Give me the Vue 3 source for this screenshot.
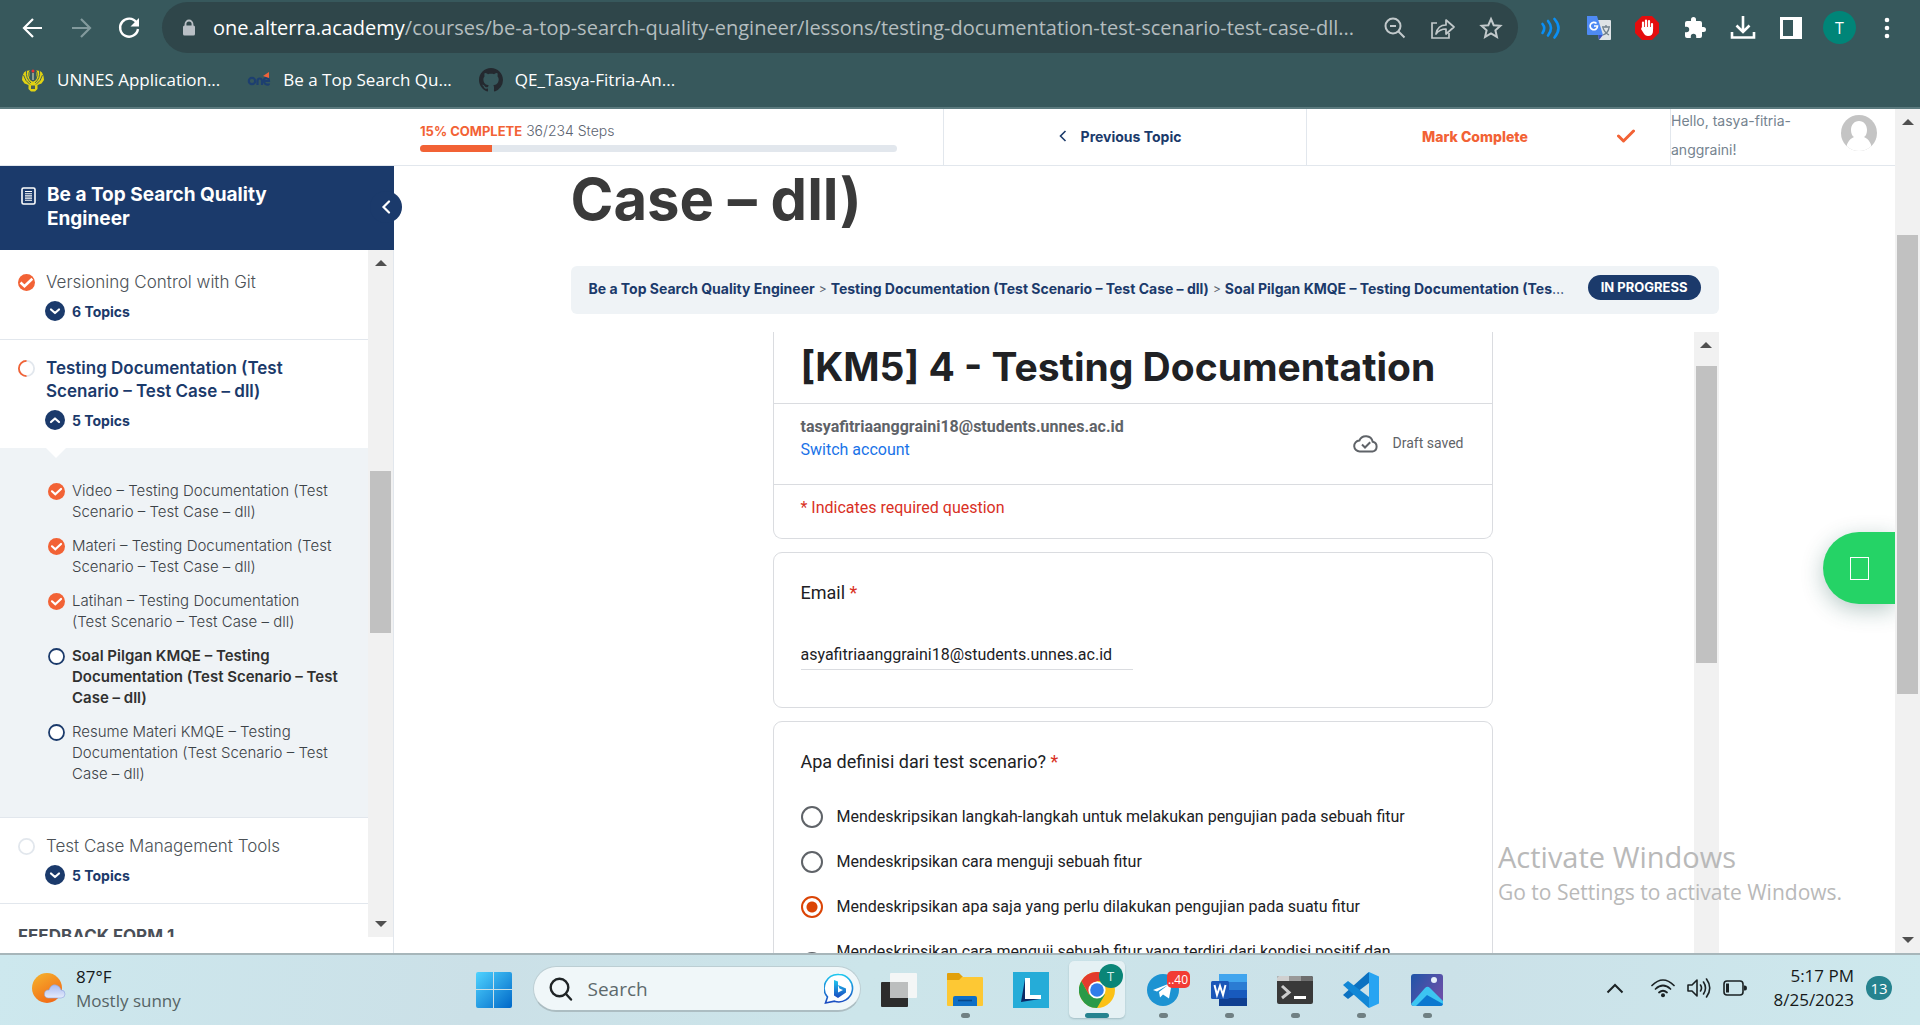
<script setup>
import { ref } from 'vue'

const lessons = [
  { title: 'Versioning Control with Git', count: '6 Topics', state: 'done', first: true },
  {
    title: 'Testing Documentation (Test\nScenario – Test Case – dll)',
    count: '5 Topics',
    state: 'partial',
    open: true,
    topics: [
      { text: 'Video – Testing Documentation (Test\nScenario – Test Case – dll)', done: true },
      { text: 'Materi – Testing Documentation (Test\nScenario – Test Case – dll)', done: true },
      { text: 'Latihan – Testing Documentation\n(Test Scenario – Test Case – dll)', done: true },
      { text: 'Soal Pilgan KMQE – Testing\nDocumentation (Test Scenario – Test\nCase – dll)', current: true },
      { text: 'Resume Materi KMQE – Testing\nDocumentation (Test Scenario – Test\nCase – dll)' }
    ]
  },
  { title: 'Test Case Management Tools', count: '5 Topics', state: 'empty' }
]

const options = [
  'Mendeskripsikan langkah-langkah untuk melakukan pengujian pada sebuah fitur',
  'Mendeskripsikan cara menguji sebuah fitur',
  'Mendeskripsikan apa saja yang perlu dilakukan pengujian pada suatu fitur',
  'Mendeskripsikan cara menguji sebuah fitur yang terdiri dari kondisi positif dan\nnegatif'
]
const answer = ref(options[2])
const email = ref('asyafitriaanggraini18@students.unnes.ac.id')
const progress = 15
</script>

<template>
  <div class="desktop">
    <header class="browser">
      <div class="toolbar">
        <nav class="nav-buttons">
          <button class="icon-btn" aria-label="Back">
            <svg width="24" height="24" viewBox="0 0 24 24"><path d="M21 12H3M12 3l-9 9 9 9" fill="none" stroke="#fff" stroke-width="2.2" /></svg>
          </button>
          <button class="icon-btn" aria-label="Forward">
            <svg width="24" height="24" viewBox="0 0 24 24"><path d="M3 12h18M12 3l9 9-9 9" fill="none" stroke="#829a9d" stroke-width="2.2" /></svg>
          </button>
          <button class="icon-btn" aria-label="Reload">
            <svg width="24" height="24" viewBox="0 0 24 24"><path d="M19.5 6.5A9 9 0 1 0 21 13" fill="none" stroke="#fff" stroke-width="2.4" /><path d="M22 2v8.500h-8.500z" fill="#fff" /></svg>
          </button>
        </nav>
        <div class="omnibox">
          <svg class="lock" width="14" height="18" viewBox="0 0 14 18"><path d="M3.500 8V5a3.500 3.500 0 0 1 7 0v3" fill="none" stroke="#b9bfc5" stroke-width="1.800" /><rect x="1" y="6.500" width="12" height="10" rx="1.500" fill="#b9bfc5" /></svg>
          <span class="url"><b>one.alterra.academy</b>/courses/be-a-top-search-quality-engineer/lessons/testing-documentation-test-scenario-test-case-dll...</span>
          <button class="icon-btn" aria-label="Zoom out">
            <svg width="24" height="24" viewBox="0 0 24 24"><g fill="none" stroke="#c2c9cb" stroke-width="2"><circle cx="10" cy="10" r="7.500" /><path d="M15.500 15.500l6 6M7 10h6" /></g></svg>
          </button>
          <button class="icon-btn" aria-label="Share">
            <svg width="26" height="24" viewBox="0 0 26 24"><g fill="none" stroke="#c2c9cb" stroke-width="1.700"><path d="M7 7H2v15h17v-5" /><path d="M6 18c1-6 4-9 10-9V4l8 7-8 7v-5c-4 0-7 1-10 5z" stroke-linejoin="round" /></g></svg>
          </button>
          <button class="icon-btn" aria-label="Bookmark">
            <svg width="24" height="24" viewBox="0 0 24 24"><path d="M12 3l2.700 6.200 6.700.6-5 4.500 1.500 6.600L12 17.400 6.100 20.900l1.500-6.600-5-4.500 6.700-.6z" fill="none" stroke="#c2c9cb" stroke-width="2" /></svg>
          </button>
        </div>
        <div class="extensions">
          <svg width="24" height="24" viewBox="0 0 24 24"><g fill="none" stroke="#0a8ff5" stroke-width="2.600" stroke-linecap="round"><path d="M3.500 8q3.500 4 0 9" /><path d="M9 5q6 7 0 14.500" /><path d="M15.500 3q8 9 0 18.500" /></g></svg>
          <svg width="26" height="26" viewBox="0 0 26 26"><path d="M10 5h14a1 1 0 0 1 1 1v18a1 1 0 0 1-1 1H13z" fill="#dfe3e6" /><path d="M12 20h5l-4 5z" fill="#3a53c4" /><path d="M1 1h10l6 19H2a1 1 0 0 1-1-1z" fill="#4e8af4" /><path d="M10.500 8.500A3.700 3.700 0 1 0 11.500 11H8" fill="none" stroke="#fff" stroke-width="1.700" /><path d="M16 12h8M20 10v2M17 13q2 5 6 7M23 13q-1 5-6 7" fill="none" stroke="#70808c" stroke-width="1.300" /></svg>
          <svg width="24" height="24" viewBox="0 0 24 24"><path d="M7 0h10l7 7v10l-7 7H7l-7-7V7z" fill="#e40d0d" /><path d="M8 13V6.500M11 12V4.500M14 12V5M17 13V8" stroke="#fff" stroke-width="2.200" stroke-linecap="round" /><path d="M7 11h11v4q0 5-5 5-3 0-4.500-3L6 13z" fill="#fff" /></svg>
          <svg width="24" height="24" viewBox="0 0 24 24"><path d="M20.500 11H19V7a2 2 0 0 0-2-2h-4V3.500a2.500 2.500 0 0 0-5 0V5H4a2 2 0 0 0-2 2v3.800h1.500a2.700 2.700 0 0 1 0 5.400H2V20a2 2 0 0 0 2 2h3.800v-1.500a2.700 2.700 0 0 1 5.400 0V22H17a2 2 0 0 0 2-2v-4h1.500a2.500 2.500 0 0 0 0-5z" fill="#fff" /></svg>
          <svg width="26" height="26" viewBox="0 0 26 26"><path d="M13 1v15M6.500 10.500L13 17l6.500-6.500M2 17v5.500h22V17" fill="none" stroke="#fff" stroke-width="2.600" /></svg>
          <svg width="24" height="24" viewBox="0 0 24 24"><path d="M1 1h22v22H1zM4 4v16h10V4z" fill="#fff" fill-rule="evenodd" /></svg>
          <span class="profile">T</span>
          <svg width="24" height="24" viewBox="0 0 24 24"><g fill="#fff"><circle cx="12" cy="4" r="2.300" /><circle cx="12" cy="12" r="2.300" /><circle cx="12" cy="20" r="2.300" /></g></svg>
        </div>
      </div>
      <nav class="bookmarks">
        <a href="#">
          <svg width="24" height="24" viewBox="0 0 24 24"><path d="M11.500 13.500L8.500 11 9 2.500Q5 2 3 4.500L1.500 8 1 12l2.500 3.500 4 1.500V21l2.500 2.500h4l2.500-2.500v-4l4-1.500L23 12l-.5-4L21 4.500Q19 2 15 2.500l.5 8.500-3 2.500z" fill="#e2d312" /><path d="M9 2.500Q6 7 10.500 13M5.500 3Q4.500 10 10 15M2.500 7Q4 13 9 16.500M15 2.500q3 4.500-1.500 10.500M18.500 3q1 7-4.500 12M21.500 7q-1.500 6-6.500 9.500" fill="none" stroke="#37585c" stroke-width=".9" /><path d="M10 17.500h4v3.500h-4z" fill="#4a6054" /><circle cx="12" cy="3" r="1.500" fill="#e33" /><path d="M12 5v7" stroke="#e9e2c0" /></svg>
          <span>UNNES Application...</span>
        </a>
        <a href="#">
          <svg width="24" height="24" viewBox="0 0 24 24"><g fill="none" stroke="#1d3f70" stroke-width="2.200"><circle cx="5" cy="13" r="3.200" /><path d="M10.500 17v-4q0-2.500 2.200-2.500T15 13v4M17 13h5q0-3-2.600-3T17 13t2.600 3.500T22 15.500" /></g><path d="M16 8l6-4v6z" fill="#f0633a" /></svg>
          <span>Be a Top Search Qu...</span>
        </a>
        <a href="#">
          <svg width="24" height="24" viewBox="0 0 16 16"><path fill="#24292f" d="M8 0C3.580 0 0 3.580 0 8c0 3.540 2.290 6.530 5.470 7.590.4.070.55-.17.55-.38 0-.19-.01-.82-.01-1.490-2.010.37-2.530-.49-2.690-.94-.09-.23-.48-.94-.82-1.130-.28-.15-.68-.52-.01-.53.63-.01 1.080.58 1.230.82.72 1.210 1.870.87 2.330.66.07-.52.28-.87.51-1.070-1.780-.2-3.640-.89-3.640-3.950 0-.87.31-1.590.82-2.150-.08-.2-.36-1.020.08-2.120 0 0 .67-.21 2.200.82.64-.18 1.320-.27 2-.27s1.360.09 2 .27c1.530-1.040 2.200-.82 2.200-.82.44 1.100.16 1.920.08 2.120.51.56.82 1.270.82 2.150 0 3.070-1.870 3.750-3.650 3.950.29.25.54.73.54 1.480 0 1.070-.01 1.930-.01 2.200 0 .21.15.46.55.38A8.010 8.010 0 0 0 16 8c0-4.420-3.580-8-8-8z" /></svg>
          <span>QE_Tasya-Fitria-An...</span>
        </a>
      </nav>
    </header>

    <div class="viewport">
      <div class="site">
        <header class="course-bar">
          <div class="brand"></div>
          <div class="progress">
            <p><strong>15% COMPLETE</strong> <span>36/234 Steps</span></p>
            <div class="track" role="progressbar" :aria-valuenow="progress"><div class="fill" :style="{ width: progress + '%' }"></div></div>
          </div>
          <a class="prev" href="#">
            <svg width="8" height="12" viewBox="0 0 8 12"><path d="M6.500 1L1.500 6l5 5" fill="none" stroke="#1b3a6b" stroke-width="1.600" /></svg>
            Previous Topic
          </a>
          <button class="mark">
            <span>Mark Complete</span>
            <svg width="18" height="14" viewBox="0 0 18 14"><path d="M1.500 7l5 5L16.500 2" fill="none" stroke="#f26235" stroke-width="3" stroke-linecap="round" stroke-linejoin="round" /></svg>
          </button>
          <div class="user">
            <p>Hello, tasya-fitria-anggraini!</p>
            <svg width="36" height="36" viewBox="0 0 36 36"><clipPath id="avatar-round"><circle cx="18" cy="18" r="18" /></clipPath><g clip-path="url(#avatar-round)"><rect width="36" height="36" fill="#c4c4c4" /><path d="M18 6c5 0 8 4 8 9 0 3-1 6-3 7 5 2 8 7 8 14H5c0-7 3-12 8-14-2-1-3-4-3-7 0-5 3-9 8-9z" fill="#fff" /></g></svg>
          </div>
        </header>

        <div class="columns">
          <aside class="sidebar">
            <div class="course-title">
              <svg width="15" height="18" viewBox="0 0 15 18"><rect x="1" y="1" width="13" height="16" rx="1.500" fill="none" stroke="#fff" stroke-width="1.600" /><path d="M4 4.500h7M4 6.700h7M4 8.900h7M4 11.100h7M4 13.300h7" stroke="#fff" stroke-width="1.100" /></svg>
              <h2>Be a Top Search Quality<br />Engineer</h2>
              <button class="collapse" aria-label="Collapse sidebar">
                <svg width="10" height="14" viewBox="0 0 10 14"><path d="M8 1.500L2.500 7 8 12.500" fill="none" stroke="#fff" stroke-width="2.200" stroke-linecap="round" /></svg>
              </button>
            </div>
            <div class="lesson-scroll">
              <div class="lesson-list">
                <section v-for="lesson in lessons" :key="lesson.title" class="lesson-block">
                  <div class="lesson" :class="{ first: lesson.first, open: lesson.open }">
                    <svg class="status" width="17" height="17" viewBox="0 0 17 17">
                      <template v-if="lesson.state === 'done'"><circle cx="8.500" cy="8.500" r="8.500" fill="#f26235" /><path d="M2.500 8.500l4 3.800 7.800-7.500" fill="none" stroke="#fff" stroke-width="2.600" /></template>
                      <template v-else><circle cx="8.500" cy="8.500" r="7.600" fill="#fff" stroke="#e2e7ed" stroke-width="1.800" /><path v-if="lesson.state === 'partial'" d="M8.500 .9a7.600 7.600 0 0 0 0 15.200" fill="none" stroke="#f26235" stroke-width="1.800" /></template>
                    </svg>
                    <div>
                      <a class="lesson-title" :class="{ active: lesson.open }" href="#">{{ lesson.title }}</a>
                      <button class="topic-toggle">
                        <svg width="20" height="20" viewBox="0 0 20 20"><circle cx="10" cy="10" r="10" fill="#1b3a6b" /><path :d="lesson.open ? 'M6 12l4-3.500 4 3.500' : 'M6 8.500l4 3.500 4-3.500'" fill="none" stroke="#fff" stroke-width="2.200" stroke-linecap="round" stroke-linejoin="round" /></svg>
                        {{ lesson.count }}
                      </button>
                    </div>
                  </div>
                  <ul v-if="lesson.open" class="topics">
                    <li v-for="topic in lesson.topics" :key="topic.text" :class="{ current: topic.current }">
                      <svg width="17" height="17" viewBox="0 0 17 17">
                        <template v-if="topic.done"><circle cx="8.500" cy="8.500" r="8.500" fill="#f26235" /><path d="M4 8.300l3.300 3 5.700-5.300" fill="none" stroke="#fff" stroke-width="2.200" stroke-linecap="round" /></template>
                        <circle v-else cx="8.500" cy="8.500" r="7.500" fill="#fff" stroke="#1b3a6b" stroke-width="1.800" />
                      </svg>
                      <a href="#">{{ topic.text }}</a>
                    </li>
                  </ul>
                </section>
                <h3 class="section-heading">FEEDBACK FORM 1</h3>
              </div>
              <div class="scrollbar">
                <i class="arrow up"></i>
                <div class="rail"><div class="thumb side-thumb"></div></div>
                <i class="arrow down"></i>
              </div>
            </div>
          </aside>

          <main class="content">
            <h1>Case – dll)</h1>
            <div class="crumbs">
              <nav><a href="#">Be a Top Search Quality Engineer</a><i>&gt;</i><a href="#">Testing Documentation (Test Scenario – Test Case – dll)</a><i>&gt;</i><a href="#">Soal Pilgan KMQE – Testing Documentation (Tes</a><span>…</span></nav>
              <strong class="badge">IN PROGRESS</strong>
            </div>
            <div class="frame">
              <form class="form" @submit.prevent>
                <section class="card top-card">
                  <h2>[KM5] 4 - Testing Documentation</h2>
                  <div class="account">
                    <div>
                      <b>tasyafitriaanggraini18@students.unnes.ac.id</b>
                      <a href="#">Switch account</a>
                    </div>
                    <span class="draft">
                      <svg width="26" height="20" viewBox="0 0 26 20"><path d="M7 18.500a5.500 5.500 0 0 1-.6-11A7 7 0 0 1 19.700 8.700a5 5 0 0 1-.2 9.800z" fill="none" stroke="#5f6368" stroke-width="2" /><path d="M9 11.500l3 3 5.200-5.200" fill="none" stroke="#5f6368" stroke-width="2" /></svg>
                      Draft saved
                    </span>
                  </div>
                  <p class="required-note">* Indicates required question</p>
                </section>
                <section class="card email-card">
                  <label class="question" for="email">Email <em>*</em></label>
                  <input id="email" v-model="email" class="email-input" type="text" />
                </section>
                <fieldset class="card choice-card">
                  <legend class="question">Apa definisi dari test scenario? <em>*</em></legend>
                  <label v-for="o in options" :key="o" class="option">
                    <input v-model="answer" type="radio" name="definition" :value="o" />
                    <span>{{ o }}</span>
                  </label>
                </fieldset>
              </form>
              <div class="scrollbar">
                <i class="arrow up"></i>
                <div class="rail"><div class="thumb frame-thumb"></div></div>
              </div>
            </div>
          </main>
        </div>
        <button class="whatsapp" aria-label="Chat"><i></i></button>
      </div>
      <div class="scrollbar page-scroll">
        <i class="arrow up"></i>
        <div class="rail"><div class="thumb page-thumb"></div></div>
        <i class="arrow down"></i>
      </div>
      <div class="watermark">
        <p class="big">Activate Windows</p>
        <p>Go to Settings to activate Windows.</p>
      </div>
    </div>

    <footer class="taskbar">
      <div class="weather">
        <svg width="34" height="32" viewBox="0 0 34 32"><defs><linearGradient id="sun" x1="0" y1="0" x2=".6" y2="1"><stop offset="0" stop-color="#f5b52e" /><stop offset="1" stop-color="#f26b16" /></linearGradient><linearGradient id="cloud" x1="0" y1="0" x2="0" y2="1"><stop offset="0" stop-color="#a9bbf0" /><stop offset="1" stop-color="#e4ebfb" /></linearGradient></defs><circle cx="15" cy="15" r="15" fill="url(#sun)" /><path d="M16 25a4 4 0 0 1 1-8q2-6 7-5 4 1 5 5a4 4 0 0 1 0 8z" fill="url(#cloud)" stroke="#8ea4de" stroke-width=".6" /></svg>
        <div><p>87°F</p><p class="muted">Mostly sunny</p></div>
      </div>
      <div class="dock">
        <button class="slot" aria-label="Start">
          <svg width="36" height="36" viewBox="0 0 36 36"><defs><linearGradient id="win" x1="0" y1="0" x2="1" y2="1"><stop offset="0" stop-color="#4fd3ff" /><stop offset="1" stop-color="#0068c8" /></linearGradient></defs><path d="M2 0h15v17H0V2a2 2 0 0 1 2-2zM18 0h16a2 2 0 0 1 2 2v15H18zM0 18h17v18H2a2 2 0 0 1-2-2zM18 18h18v16a2 2 0 0 1-2 2H18z" fill="url(#win)" /></svg>
        </button>
        <label class="search">
          <svg width="24" height="24" viewBox="0 0 24 24"><g fill="none" stroke="#1f2426" stroke-width="2.400" stroke-linecap="round"><circle cx="10.500" cy="10.500" r="8.800" /><path d="M17 17l5 5.500" /></g></svg>
          <input type="text" placeholder="Search" aria-label="Search" />
          <svg width="30" height="32" viewBox="0 0 30 32"><defs><linearGradient id="bing" x1="0" y1="0" x2="0" y2="1"><stop offset="0" stop-color="#20c8ef" /><stop offset="1" stop-color="#1a49c0" /></linearGradient></defs><path d="M15 1.500a13.700 13.700 0 1 1-4.500 26.700L1.500 30l2-6A13.700 13.700 0 0 1 15 1.500z" fill="#fff" stroke="url(#bing)" stroke-width="1.600" /><path d="M10 7l4 1.500v11L19 17l-3.500-1.500L14 12l8 3.500v4L14 25l-4-2.500z" fill="url(#bing)" /></svg>
        </label>
        <button class="slot" aria-label="Task view">
          <svg width="36" height="36" viewBox="0 0 36 36"><rect x="0" y="10" width="27" height="25" rx="1" fill="#2c2c2c" /><rect x="9" y="1" width="27" height="25" rx="1" fill="#f4f6f6" /><path d="M9 10h18v16H9z" fill="#bcbebe" /></svg>
        </button>
        <button class="slot running" aria-label="File Explorer">
          <svg width="36" height="36" viewBox="0 0 36 36"><path d="M0 2q0-1 1-1h11l4 4h19v5H0z" fill="#e2a00b" /><path d="M0 8h12l3-3h20q1 0 1 1v27q0 1-1 1H1q-1 0-1-1z" fill="#fdc834" /><path d="M6 34V26q0-2 2-2h20q2 0 2 2v8z" fill="#0f6fc6" /><path d="M11 28.500h14" stroke="#07478a" stroke-width="1.600" /></svg>
        </button>
        <button class="slot" aria-label="L">
          <svg width="36" height="36" viewBox="0 0 36 36"><path fill="#25acd8" d="M0 0h36v36H0z" /><path d="M12 7l-4 23 19-3-14-3z" fill="#0b2a66" /><path d="M12 6h5v17h11v4H12z" fill="#fff" /></svg>
        </button>
        <button class="slot active" aria-label="Chrome">
          <svg class="app" width="36" height="36" viewBox="0 0 36 36"><circle cx="18" cy="18" r="18" fill="#fbc116" /><path d="M2.400 9A18 18 0 0 0 18 36l8-13.500H10z" fill="#2a9a48" /><path d="M2.400 9a18 18 0 0 1 31.200 0H18L10 22.500z" fill="#e33b2e" /><circle cx="18" cy="18" r="8.600" fill="#fff" /><circle cx="18" cy="18" r="6.800" fill="#2f7de9" /></svg>
          <span class="mini-profile">T</span>
        </button>
        <button class="slot running" aria-label="Telegram">
          <svg class="app" width="32" height="32" viewBox="0 0 32 32"><circle cx="16" cy="16" r="16" fill="#1d93d2" /><path d="M6 16l19-7.500-3 16-6-4-3 3-1-5.500 9-7-11 6.500z" fill="#fff" /></svg>
          <span class="count">..40</span>
        </button>
        <button class="slot running" aria-label="Word">
          <svg width="36" height="36" viewBox="0 0 36 36"><path d="M8 2h28v8H8z" fill="#41a5ee" /><path d="M8 10h28v8H8z" fill="#2b7cd3" /><path d="M8 18h28v8H8z" fill="#185abd" /><path d="M8 26h28v8H8z" fill="#103f91" /><rect y="9" width="18" height="18" rx="1.500" fill="#1a56b8" /><path d="M3.500 13l2.500 10 3-9 3 9 2.500-10" fill="none" stroke="#fff" stroke-width="2" /></svg>
        </button>
        <button class="slot running" aria-label="Terminal">
          <svg width="36" height="28" viewBox="0 0 36 28"><rect width="36" height="28" rx="2" fill="#393939" /><path d="M0 5V2q0-2 2-2h10v5z" fill="#d0d0d0" /><path d="M12 0h12v5H12z" fill="#999" /><path d="M24 0h10q2 0 2 2v3H24z" fill="#6e6e6e" /><path d="M5 10l7 6.500L5 22" fill="none" stroke="#ccc" stroke-width="3" /><path d="M17 21.500h12" stroke="#fff" stroke-width="3" /></svg>
        </button>
        <button class="slot running" aria-label="Visual Studio Code">
          <svg width="36" height="36" viewBox="0 0 36 36"><path d="M26 0v11L5 27l-5-4 24.500-22z" fill="#0b71c1" /><path d="M26 36V25L5 9l-5 4 24.500 22z" fill="#1187d6" /><path d="M26 0l10 4.500v27L26 36z" fill="#27a4f2" /></svg>
        </button>
        <button class="slot running" aria-label="Photos">
          <svg width="32" height="32" viewBox="0 0 32 32"><defs><linearGradient id="sky" x1="0" y1="0" x2="1" y2=".6"><stop offset="0" stop-color="#1f55a8" /><stop offset="1" stop-color="#6a4fa8" /></linearGradient><clipPath id="tile"><rect width="32" height="32" rx="3" /></clipPath></defs><g clip-path="url(#tile)"><path fill="url(#sky)" d="M0 0h32v32H0z" /><path d="M0 30l14-16q2.500-2.500 5 0l13 13v5H0z" fill="#3cc5f2" /><path d="M5 32l11-11 16 9v2z" fill="#0b78d0" /></g><circle cx="23" cy="6" r="3" fill="#e6effa" /></svg>
        </button>
      </div>
      <div class="tray">
        <svg class="chevron" width="18" height="12" viewBox="0 0 18 12"><path d="M1.500 10.500L9 3l7.500 7.500" fill="none" stroke="#1b2224" stroke-width="2" /></svg>
        <svg width="24" height="20" viewBox="0 0 24 20"><g fill="none" stroke="#1b2224" stroke-width="1.700" stroke-linecap="round"><path d="M1 7.500q11-11 22 0M4.500 11q7.500-7 15 0M8 14.500q4-3.500 8 0" /></g><circle cx="12" cy="17.300" r="2" fill="#1b2224" /></svg>
        <svg width="24" height="20" viewBox="0 0 24 20"><g fill="none" stroke="#1b2224" stroke-width="1.600" stroke-linecap="round"><path d="M1 7v6h4l5 5V2L5 7z" stroke-linejoin="round" /><path d="M13.500 7q2 3 0 6M16.500 4q4 6 0 12M19.500 1q6.500 9 0 18" /></g></svg>
        <svg width="24" height="16" viewBox="0 0 24 16"><rect x="1" y="1" width="19" height="14" rx="3" fill="none" stroke="#1b2224" stroke-width="1.600" /><path d="M3 3.500h3v9H3zM21 5.500h1q2 0 2 2.500t-2 2.500h-1z" fill="#1b2224" /></svg>
        <div class="clock"><p>5:17 PM</p><p>8/25/2023</p></div>
        <span class="notify">13</span>
      </div>
    </footer>
  </div>
</template>

<style>
body {
  margin: 0;
}
</style>

<style scoped>
.desktop {
  --ui: "Open Sans", "Noto Sans", sans-serif;
  --site: Inter, "Open Sans", sans-serif;
  --navy: #1b3a6b;
  --orange: #f26235;
  display: flex;
  flex-direction: column;
  height: 100vh;
  overflow: hidden;
  font-family: var(--ui);
}
.desktop *,
.desktop *::before,
.desktop *::after {
  box-sizing: border-box;
}
p, h1, h2, h3, ul {
  margin: 0;
  padding: 0;
}
a {
  color: inherit;
  text-decoration: none;
}
button {
  border: 0;
  padding: 0;
  background: none;
  font: inherit;
  color: inherit;
}
svg {
  display: block;
  flex: none;
}

/* Browser chrome */
.browser {
  flex: none;
  height: 109px;
  background: #37585c;
  border-bottom: 2px solid #5b7a7e;
}
.toolbar {
  display: flex;
  height: 54px;
  padding: 2px 9px 0 9px;
}
.nav-buttons {
  display: flex;
  width: 153px;
}
.icon-btn {
  display: flex;
  align-items: center;
  justify-content: center;
  flex: none;
  width: 48px;
}
.omnibox {
  display: flex;
  flex: 1;
  min-width: 0;
  height: 51px;
  padding: 0 3px 0 20px;
  border-radius: 26px;
  background: #2f464a;
  align-items: center;
}
.lock {
  margin-right: 17px;
}
.url {
  flex: 1;
  overflow: hidden;
  white-space: nowrap;
  font-size: 20px;
  line-height: 28px;
  color: #b4bdbf;
}
.url b {
  font-weight: 400;
  color: #fff;
}
.extensions {
  display: flex;
  align-items: center;
  height: 51px;
  margin-left: 9px;
}
.extensions > * {
  margin: 0 12px;
}
.extensions > svg[width="26"] {
  margin: 0 11px;
}
.extensions .profile {
  display: flex;
  align-items: center;
  justify-content: center;
  width: 33px;
  height: 33px;
  margin: 0 7px 0 8px;
  border-radius: 50%;
  background: #008578;
  color: #fff;
  font-size: 16px;
}
.bookmarks {
  display: flex;
  gap: 27px;
  align-items: center;
  height: 52px;
  padding-left: 21px;
  color: #fff;
  font-size: 17px;
  line-height: 26px;
}
.bookmarks a {
  display: flex;
  align-items: center;
  gap: 12px;
}

/* Page */
.viewport {
  position: relative;
  display: flex;
  flex: 1;
  min-height: 0;
  background: #fff;
}
.site {
  position: relative;
  display: flex;
  flex-direction: column;
  flex: 1;
  min-width: 0;
  font-family: var(--site);
}
.course-bar {
  display: grid;
  grid-template-columns: 394px 549fr 363fr 364fr 225fr;
  flex: none;
  height: 57px;
  border-bottom: 1px solid #e2e7ed;
}
.progress {
  padding: 12px 46px 0 26px;
}
.progress p {
  font-size: 14px;
  line-height: 20px;
  color: #5c6470;
}
.progress span {
  font-weight: 300;
}
.progress strong {
  font-size: 13px;
  color: var(--orange);
  font-weight: 700;
}
.track {
  height: 7px;
  margin-top: 4px;
  border-radius: 4px;
  background: #e2e7ed;
  overflow: hidden;
}
.fill {
  height: 100%;
  background: var(--orange);
}
.prev {
  display: flex;
  align-items: center;
  justify-content: center;
  gap: 14px;
  padding: 0 10px 2px 0;
  border-left: 1px solid #e2e7ed;
  color: var(--navy);
  font-size: 14px;
  font-weight: 700;
}
.mark {
  display: grid;
  grid-template-columns: 1fr auto;
  align-items: center;
  padding: 0 35px 2px 26px;
  border-left: 1px solid #e2e7ed;
  color: var(--orange);
  font-size: 14px;
  font-weight: 800;
}
.user {
  display: flex;
  justify-content: space-between;
  border-left: 1px solid #e2e7ed;
  padding-right: 18px;
}
.user p {
  width: 130px;
  margin-top: -3px;
  font-size: 14px;
  line-height: 29px;
  color: #75838f;
}
.user svg {
  margin-top: 6px;
}
.columns {
  display: flex;
  flex: 1;
  min-height: 0;
}

/* Sidebar */
.sidebar {
  display: flex;
  flex-direction: column;
  flex: none;
  width: 394px;
  padding-bottom: 16px;
  border-right: 1px solid #e2e7ed;
}
.course-title {
  position: relative;
  display: flex;
  flex: none;
  gap: 11px;
  height: 84px;
  margin-right: -1px;
  padding: 17px 21px;
  background: var(--navy);
  color: #fff;
}
.course-title > svg {
  margin-top: 4px;
}
.course-title h2 {
  font-size: 19px;
  line-height: 24px;
  font-weight: 700;
}
.collapse {
  position: absolute;
  right: -8px;
  top: 25px;
  display: flex;
  align-items: center;
  justify-content: center;
  width: 32px;
  height: 32px;
  border-radius: 50%;
  background: var(--navy);
}
.lesson-scroll {
  display: flex;
  flex: 1;
  min-height: 0;
}
.lesson-list {
  flex: 1;
  overflow: hidden;
}
.lesson-block {
  border-bottom: 1px solid #e2e7ed;
}
.lesson {
  display: flex;
  gap: 11px;
  padding: 17px 18px;
}
.lesson.first {
  padding-top: 21px;
}
.status {
  margin-top: 3px;
}
.lesson-title {
  display: block;
  white-space: pre-line;
  font-size: 17px;
  line-height: 23px;
  font-weight: 300;
  color: #4c5257;
}
.lesson-title.active {
  color: var(--navy);
  font-weight: 600;
}
.topic-toggle {
  display: flex;
  align-items: center;
  gap: 7px;
  height: 22px;
  margin: 6px 0 0 -1px;
  color: var(--navy);
  font-size: 14px;
  font-weight: 700;
}
.topics {
  position: relative;
  display: flex;
  flex-direction: column;
  gap: 13px;
  padding: 32px 0 33px 48px;
  background: #eff3f6;
  list-style: none;
}
.topics::before {
  content: "";
  position: absolute;
  top: 0;
  left: 46px;
  border: 10px solid transparent;
  border-top-color: #fff;
  border-bottom: 0;
}
.topics li {
  display: flex;
  gap: 7px;
  font-size: 15px;
  line-height: 21px;
  font-weight: 300;
  color: #3c4247;
}
.topics li svg {
  margin-top: 3px;
}
.topics a {
  white-space: pre-line;
}
.topics .current {
  color: #303030;
  font-weight: 600;
}
.section-heading {
  padding: 20px 18px;
  font-size: 17px;
  line-height: 24px;
  font-weight: 700;
  color: #4a4f58;
}

/* Scrollbars */
.scrollbar {
  display: flex;
  flex-direction: column;
  flex: none;
  width: 25px;
  background: #f1f1f1;
}
.rail {
  flex: 1;
  min-height: 0;
}
.thumb {
  width: 21px;
  margin: 0 auto;
  background: #c1c1c1;
}
.arrow {
  flex: none;
  width: 0;
  height: 0;
  margin: 10px auto;
  border: 6px solid transparent;
}
.arrow.up {
  border-top: 0;
  border-bottom-color: #505050;
}
.arrow.down {
  border-bottom: 0;
  border-top-color: #505050;
}
.side-thumb {
  height: 162px;
  margin-top: 195px;
}
.frame-thumb {
  height: 297px;
  margin-top: 8px;
}
.page-thumb {
  height: 459px;
  margin-top: 100px;
}

/* Lesson content */
.content {
  display: flex;
  flex-direction: column;
  flex: 1;
  min-width: 0;
  max-width: 1148px;
  margin: 0 auto;
}
h1 {
  flex: none;
  height: 100px;
  font-size: 58px;
  line-height: 66px;
  font-weight: 700;
  color: #3a3a3a;
}
.crumbs {
  display: flex;
  flex: none;
  justify-content: space-between;
  height: 48px;
  padding: 9px 18px;
  border-radius: 6px;
  background: #eff3f6;
}
.crumbs nav {
  display: flex;
  white-space: nowrap;
  font-size: 14px;
  line-height: 28px;
  font-weight: 700;
  color: var(--navy);
}
.crumbs i {
  padding: 0 4px;
  font-style: normal;
  font-weight: 400;
  font-size: 12px;
  color: #5c6470;
}
.crumbs span {
  font-weight: 400;
}
.badge {
  height: 25px;
  padding: 0 13px;
  border-radius: 13px;
  background: var(--navy);
  color: #fff;
  font-size: 13px;
  line-height: 24px;
  font-weight: 700;
}
.frame {
  display: flex;
  flex: 1;
  min-height: 0;
  margin-top: 18px;
  font-family: Roboto, sans-serif;
  color: #202124;
}
.form {
  display: flex;
  flex-direction: column;
  flex: 1;
  gap: 13px;
  min-width: 0;
  overflow: hidden;
  padding: 0 201px 0 202px;
}
.card {
  flex: none;
  margin: 0;
  padding: 0 28px;
  border: 1px solid #dadce0;
  border-radius: 9px;
}
.top-card {
  padding: 0;
  border-top: 0;
  border-top-left-radius: 0;
  border-top-right-radius: 0;
}
.top-card h2 {
  padding: 11px 27px 13px;
  font-family: var(--site);
  font-size: 39px;
  line-height: 47px;
  font-weight: 700;
  white-space: nowrap;
}
.account {
  display: flex;
  justify-content: space-between;
  align-items: center;
  height: 82px;
  padding: 0 28px 0 27px;
  border: solid #dadce0;
  border-width: 1px 0;
  font-size: 16px;
  line-height: 23px;
}
.account b {
  display: block;
  font-weight: 700;
  color: #5f6368;
}
.account a {
  color: #1a73e8;
}
.account > div {
  padding-bottom: 12px;
}
.draft {
  display: flex;
  align-items: center;
  gap: 14px;
  padding-bottom: 2px;
  font-size: 14px;
  color: #5f6368;
}
.required-note {
  padding: 11px 27px 19px;
  font-size: 16px;
  line-height: 23px;
  color: #d93025;
}
.question {
  display: block;
  padding: 0;
  font-size: 18px;
  line-height: 24px;
}
.question em {
  font-style: normal;
  color: #d93025;
}
.email-card {
  height: 156px;
  padding: 28px 27px;
}
.email-input {
  display: block;
  width: 332px;
  height: 31px;
  margin-top: 34px;
  padding: 0;
  border: 0;
  border-bottom: 1px solid #dadce0;
  background: none;
  color: #202124;
  font-family: Roboto, sans-serif;
  font-size: 16px;
  outline: 0;
}
.choice-card {
  padding: 28px 27px;
}
.choice-card legend {
  float: left;
  width: 100%;
  margin-bottom: 32px;
}
.option {
  clear: both;
  display: flex;
  align-items: center;
  gap: 14px;
  min-height: 22px;
  margin-bottom: 23px;
  font-size: 16px;
  line-height: 22px;
  white-space: pre-line;
}
.option input {
  appearance: none;
  flex: none;
  width: 22px;
  height: 22px;
  margin: 0;
  border: 2px solid #5f6368;
  border-radius: 50%;
}
.option input:checked {
  border-color: #db4405;
  background: radial-gradient(circle, #db4405 5px, transparent 6px);
}
.whatsapp {
  position: absolute;
  right: 0;
  top: 423px;
  display: flex;
  align-items: center;
  justify-content: center;
  width: 72px;
  height: 72px;
  border-radius: 36px 0 0 36px;
  background: #25d366;
  box-shadow: 0 6px 22px rgba(20, 80, 70, 0.3);
  clip-path: inset(-40px 0 -40px -40px);
}
.whatsapp i {
  width: 19px;
  height: 23px;
  border: 1px solid #fff;
}
.watermark {
  position: absolute;
  right: 80px;
  bottom: 45px;
  width: 342px;
  color: #b9b9b9;
  font-size: 21px;
  line-height: 32px;
  white-space: nowrap;
}
.watermark .big {
  font-size: 29px;
  line-height: 38px;
}

/* Taskbar */
.taskbar {
  display: grid;
  grid-template-columns: 1fr auto 1fr;
  flex: none;
  height: 72px;
  border-top: 2px solid #a7b6ba;
  background: linear-gradient(100deg, #cde8ee, #cbe0e7 25%, #cce5ea 45%, #cbe1e8 75%, #cde8ed);
  color: #16191a;
  font-size: 17px;
  line-height: 24px;
}
.weather {
  display: flex;
  gap: 10px;
  padding: 10px 0 0 32px;
}
.weather svg {
  margin-top: 8px;
}
.weather .muted {
  color: #566365;
}
.dock {
  display: flex;
}
.slot {
  position: relative;
  display: flex;
  align-items: center;
  justify-content: center;
  width: 66px;
}
.slot.running::after,
.slot.active::after {
  content: "";
  position: absolute;
  bottom: 7px;
  left: 50%;
  width: 9px;
  height: 5px;
  margin-left: -4px;
  border-radius: 3px;
  background: #708083;
}
.slot.active::after {
  width: 24px;
  margin-left: -12px;
  background: #26838f;
}
.slot.active::before {
  content: "";
  position: absolute;
  top: 6px;
  left: 5px;
  width: 56px;
  height: 57px;
  border-radius: 5px;
  background: #e5f1f4;
  box-shadow: 0 1px 2px rgba(0, 40, 50, 0.2);
}
.app {
  position: relative;
}
.mini-profile {
  position: absolute;
  top: 9px;
  right: 7px;
  width: 24px;
  height: 24px;
  border-radius: 50%;
  background: #0a8577;
  color: #d7efec;
  font-size: 13px;
  line-height: 24px;
}
.count {
  position: absolute;
  top: 16px;
  right: 6px;
  width: 23px;
  height: 17px;
  border-radius: 5px;
  background: #f23c34;
  color: #fff;
  font-size: 12px;
  line-height: 17px;
}
.search {
  display: flex;
  align-items: center;
  width: 328px;
  height: 46px;
  margin: 11px 5px 0 6px;
  padding: 0 6px 0 15px;
  border: 1px solid #bcced3;
  border-bottom: 2px solid #acbdc2;
  border-radius: 23px;
  background: #f0f7f9;
}
.search input {
  flex: 1;
  min-width: 0;
  padding: 0;
  margin-left: 15px;
  border: 0;
  background: none;
  outline: 0;
  color: #16191a;
  font-family: var(--ui);
  font-size: 19px;
}
.search input::placeholder {
  color: #5d696c;
  opacity: 1;
}
.tray {
  display: flex;
  align-items: center;
  justify-content: flex-end;
  gap: 12px;
  padding: 0 28px 4px 0;
}
.chevron {
  margin-right: 15px;
}
.clock {
  width: 95px;
  text-align: right;
  white-space: nowrap;
}
.notify {
  width: 26px;
  height: 24px;
  border-radius: 12px;
  background: #26838f;
  color: #fff;
  text-align: center;
  font-size: 15px;
  line-height: 24px;
}
</style>
